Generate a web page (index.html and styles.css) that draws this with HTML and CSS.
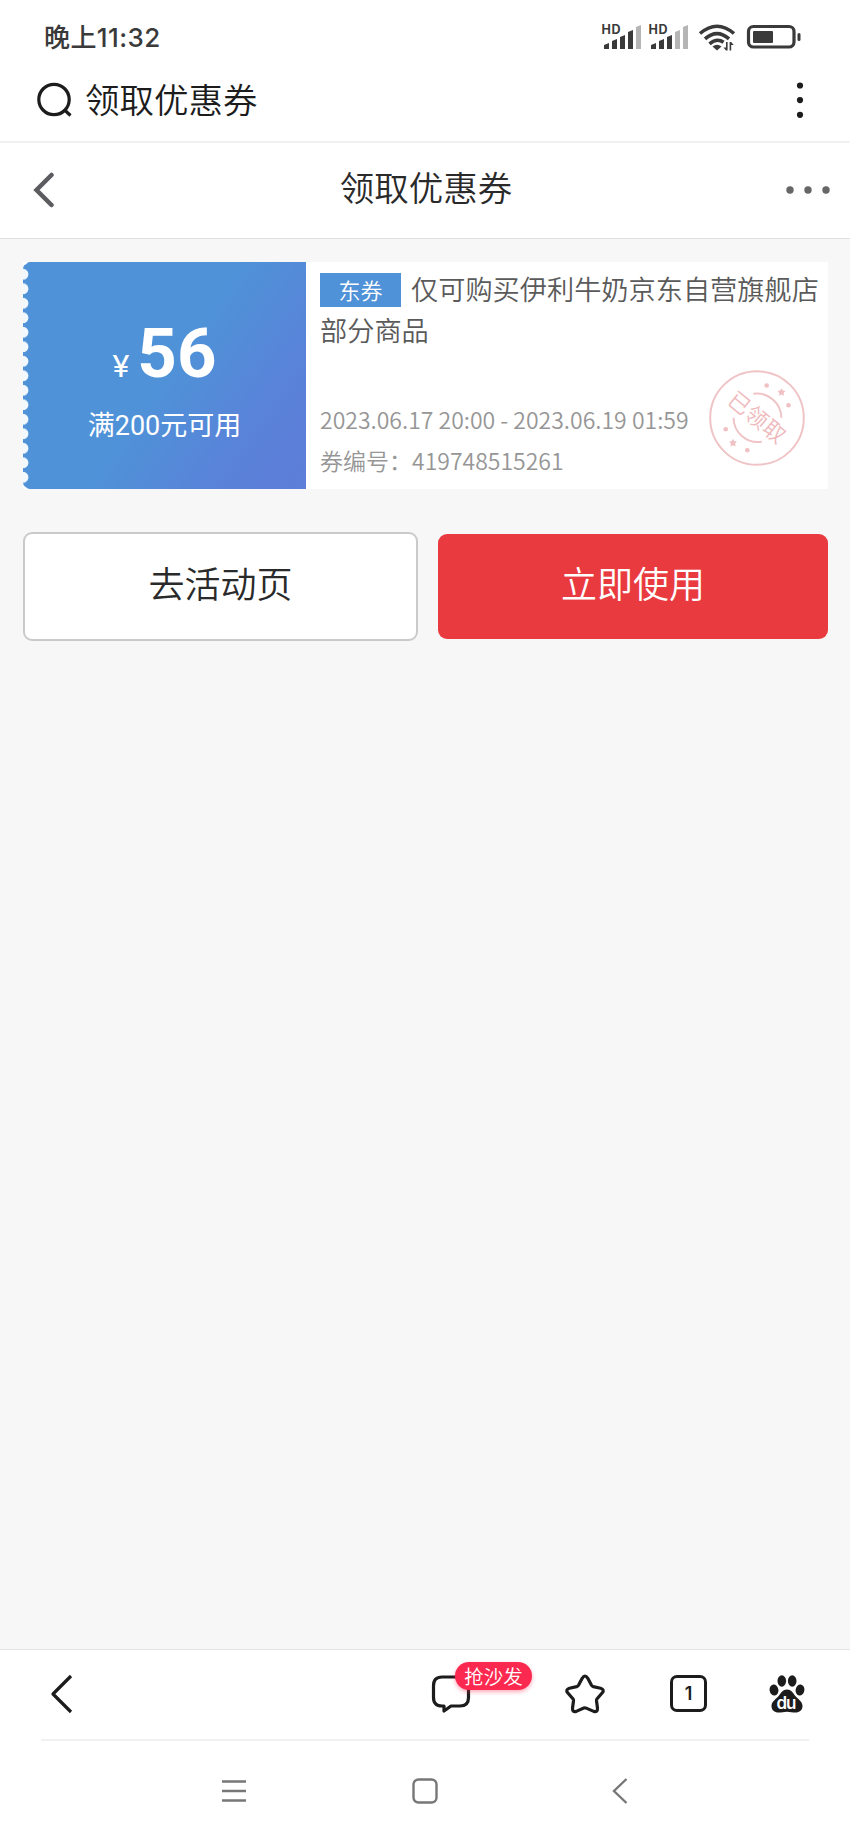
FILE: index.html
```
<!DOCTYPE html>
<html lang="zh-CN">

<head>
  <meta charset="utf-8">
  <title>领取优惠券</title>
  <meta name="viewport" content="width=device-width, initial-scale=1.0">
  <link rel="stylesheet" href="styles.css">
</head>

<body>
  <div class="container">
    <div class="status-bar">
      <span class="time">晚上11:32</span>
      <svg class="status-icons" width="204" height="32" viewBox="600 20 204 32">
        <g fill="#3a3a3a">
          <text class="hd" x="601.5" y="34" textLength="19">HD</text>
          <path d="M604 49v-4l5-2v6zM612 49v-8l5-2v10zM620 49V37l5-2v14zM628 49V32l5-2v19z" />
          <path fill="#b5b5b5" d="M636 49V27l5-2v24z" />
          <text class="hd" x="648.5" y="34" textLength="19">HD</text>
          <path d="M651 49v-4l5-2v6zM659 49v-8l5-2v10zM667 49V37l5-2v14z" />
          <path fill="#b5b5b5" d="M675 49V32l5-2v19zM683 49V27l5-2v24z" />
          <path d="M712.500 46.500q4.500-3.500 9 0l-4.500 4z" />
          <path d="M727.600 42v8.500h-1.600l-2.500-3h2.500v-5.500zM729.600 50.500v-8.500h1.600l2.500 3h-2.500v5.500z" />
        </g>
        <g fill="none" stroke="#3a3a3a">
          <path stroke-width="3.600" d="M700 33.500q17-14.500 34 0M705 38.800q12-10.500 24 0M709.500 43.800q7.500-6.200 14-1.500" />
          <rect x="748.500" y="26.500" width="45.500" height="20.500" rx="5" stroke-width="3.200" />
        </g>
        <rect x="753" y="31" width="20" height="12" rx="1" fill="#3a3a3a" />
        <rect x="797.500" y="33" width="3" height="8" rx="1.500" fill="#3a3a3a" />
      </svg>
    </div>

    <div class="search-bar">
      <svg class="search-icon" width="36" height="36" viewBox="0 0 36 36">
        <circle cx="18" cy="17.500" r="15.200" />
        <path d="M28 27.500l6.500 6" />
      </svg>
      <span class="search-text">领取优惠券</span>
      <svg class="more-v" width="8" height="36" viewBox="0 0 8 36">
        <circle cx="4" cy="3.500" r="3.100" />
        <circle cx="4" cy="18.100" r="3.100" />
        <circle cx="4" cy="32.800" r="3.100" />
      </svg>
    </div>

    <div class="header">
      <svg class="back" width="22" height="36" viewBox="0 0 22 36">
        <path d="M18.500 3L3.500 18l15 15" />
      </svg>
      <h1>领取优惠券</h1>
      <svg class="more-h" width="46" height="8" viewBox="0 0 46 8">
        <circle cx="5" cy="4" r="3.700" />
        <circle cx="23" cy="4" r="3.700" />
        <circle cx="41" cy="4" r="3.700" />
      </svg>
    </div>

    <div class="body">
      <div class="coupon">
        <div class="coupon-left">
          <div class="price"><span class="yen">¥</span>56</div>
          <div class="limit">满200元可用</div>
        </div>
        <div class="coupon-right">
          <p class="coupon-title"><span class="tag">东券</span>仅可购买伊利牛奶京东自营旗舰店部分商品</p>
          <div class="coupon-info">
            <div>2023.06.17 20:00 - 2023.06.19 01:59</div>
            <div>券编号：419748515261</div>
          </div>
          <svg class="stamp" width="98" height="98" viewBox="-49 -49 98 98">
            <circle r="46.800" />
            <path d="M-3.700-24.200A24.500 24.500 0 0 1 24.400-.2M-23.500-.2A24.500 24.500 0 0 0 4.700 23.800" />
            <text transform="rotate(39.500)" x="-34" y="7.500" textLength="67">已领取</text>
            <g class="stars">
              <path d="M0-4L1.300-1.600 4-1.200 2.100.8 2.500 3.600 0 2.400-2.500 3.600-2.100.8-4-1.200-1.300-1.600z" transform="translate(24.500 -25.800)" />
              <path d="M0-4L1.300-1.600 4-1.200 2.100.8 2.500 3.600 0 2.400-2.500 3.600-2.100.8-4-1.200-1.300-1.600z" transform="translate(-24 24.800)" />
              <circle cx="9.700" cy="-32.500" r="2.300" />
              <circle cx="31.500" cy="-12.800" r="2.300" />
              <circle cx="-31.300" cy="11.200" r="2.300" />
              <circle cx="-9.700" cy="32.300" r="2.300" />
            </g>
          </svg>
        </div>
      </div>

      <div class="button-container">
        <button class="button button-activity">去活动页</button>
        <button class="button button-use">立即使用</button>
      </div>
    </div>

    <div class="toolbar">
      <svg class="tool tool-back" width="24" height="40" viewBox="0 0 24 40">
        <path d="M21 2L3 20l18 18" />
      </svg>
      <div class="comment">
        <svg class="tool" width="40" height="40" viewBox="0 0 40 40">
          <path d="M11 3h18q8.500 0 8.500 8.500v12q0 8.500-8.500 8.500h-9l-7 5v-5h-2q-8.500 0-8.500-8.500v-12Q2.500 3 11 3z" />
        </svg>
        <span class="badge">抢沙发</span>
      </div>
      <svg class="tool tool-star" width="42" height="40" viewBox="0 0 42 40">
        <path d="M18.200 4.300q2.800-4.600 5.600 0l3.700 7q.6 1 1.800 1.300l7.300 1.600q4.200 1.300 1.700 4.500l-5.200 6q-.7.900-.6 2l1 7.600q.1 4.200-3.800 3.100l-7.500-3.300q-1.200-.5-2.400 0l-7.500 3.300q-3.900 1.100-3.800-3.100l1-7.600q.1-1.100-.6-2l-5.200-6q-2.500-3.200 1.700-4.500l7.300-1.600q1.200-.3 1.800-1.300z" />
      </svg>
      <div class="tabs">1</div>
      <svg class="paw" width="36" height="38" viewBox="0 0 36 38">
        <ellipse cx="5" cy="15" rx="4.400" ry="5.600" transform="rotate(-8 5 15)" />
        <ellipse cx="12.800" cy="6" rx="4.300" ry="5.700" />
        <ellipse cx="23.200" cy="6" rx="4.300" ry="5.700" />
        <ellipse cx="31" cy="15" rx="4.400" ry="5.600" transform="rotate(8 31 15)" />
        <path d="M18 14.500c-5 0-6 4-9 7.200-3.500 3.500-6.500 5.300-6.500 9.300 0 4.200 3 6.500 7 6.500 3 0 5.500-.8 8.500-.8s5.500.8 8.500.8c4 0 7-2.300 7-6.500 0-4-3-5.800-6.500-9.300-3-3.200-4-7.200-9-7.200z" />
        <text x="7.500" y="34" textLength="20">du</text>
      </svg>
    </div>

    <div class="system-nav">
      <svg width="24" height="26" viewBox="0 0 24 26">
        <path d="M0 3.500h24M0 13h24M0 22.500h24" />
      </svg>
      <svg width="26" height="26" viewBox="0 0 26 26">
        <rect x="1.500" y="1.500" width="23" height="23" rx="5" />
      </svg>
      <svg width="24" height="26" viewBox="-8 0 24 26">
        <path d="M14.500 1L2 13l12.500 12" />
      </svg>
    </div>
  </div>
</body>

</html>
```
FILE: styles.css
```
/* variables */
:root {
  --bg-color: #f7f7f7;
  --blue: #4f92d8;
  --red: #e93a3f;
  --dark: #1c1c1c;
}

/* global & fonts */
* {
  box-sizing: border-box;
}

body,
html {
  margin: 0;
  padding: 0;
  background: #fff;
  font-family: 'Noto Sans CJK SC', sans-serif;
  font-weight: 350;
}

svg {
  display: block;
  flex: none;
}

.container {
  height: 1842px;
  display: flex;
  flex-direction: column;
}

/* phone status bar */
.status-bar {
  height: 62px;
  padding: 9px 46px 0 44px;
  display: flex;
  justify-content: space-between;
  align-items: center;
  color: #3a3a3a;
}

.time {
  font-family: Inter, 'Noto Sans CJK SC', sans-serif;
  font-size: 26px;
  font-weight: 500;
  letter-spacing: 0.4px;
}

.status-icons {
  margin-top: 1px;
}

.hd {
  font: 700 12.500px Inter, sans-serif;
}

/* browser title */
.search-bar {
  height: 81px;
  padding: 0 46px 4px 36px;
  display: flex;
  align-items: center;
  border-bottom: 2px solid #f1f1f1;
}

.search-icon {
  fill: none;
  stroke: var(--dark);
  stroke-width: 3.2;
}

.search-text {
  margin: 0 0 4px 13px;
  font-size: 34.500px;
  line-height: 50px;
  color: var(--dark);
}

.more-v {
  margin-left: auto;
  fill: var(--dark);
}

/* page header */
.header {
  height: 96px;
  padding: 0 19px 2px 33px;
  display: flex;
  align-items: center;
  justify-content: space-between;
  border-bottom: 1px solid #dedede;
}

.header h1 {
  margin: 0 0 8px 12px;
  font-size: 34.500px;
  font-weight: 350;
  line-height: 50px;
  color: #2a2a2a;
}

.back {
  fill: none;
  stroke: #5c5c60;
  stroke-width: 4.5;
  stroke-linecap: round;
}

.more-h {
  fill: #666;
}

/* contents */
.body {
  flex: 1;
  padding: 23px 22px 0 23px;
  background: var(--bg-color);
}

.coupon {
  height: 227px;
  display: flex;
  background: #fff;
}

.coupon-left {
  width: 283px;
  padding-top: 57px;
  text-align: center;
  color: #fff;
  background:
    radial-gradient(circle at 0 7.300px, #f2f8fd 5px, transparent 5.800px) 0 5px / 7px 14.500px repeat-y,
    linear-gradient(125deg, #4f92d8 0%, #4f92d8 50%, #5a82d9 80%, #5d7dd9 100%);
  border-radius: 7px 0 0 7px;
}

.price {
  font: 700 69px/70px Roboto, sans-serif;
}

.yen {
  margin-right: 8px;
  font-size: 32px;
  font-weight: 400;
}

.limit {
  margin-top: 5px;
  font: 400 27px/40px Roboto, 'Noto Sans CJK SC', sans-serif;
}

.coupon-right {
  position: relative;
  flex: 1;
  padding: 6px 6px 8px 14px;
  display: flex;
  flex-direction: column;
  justify-content: space-between;
}

.coupon-title {
  margin: 0;
  font-size: 27.200px;
  line-height: 41px;
  color: #5a5a5a;
}

.tag {
  display: inline-block;
  width: 81px;
  height: 34px;
  margin: 5px 10px 0 0;
  vertical-align: top;
  text-align: center;
  font-size: 22px;
  line-height: 33px;
  color: #fff;
  background: var(--blue);
}

.coupon-info {
  font-size: 23px;
  line-height: 41px;
  color: #969696;
  white-space: nowrap;
}

.stamp {
  position: absolute;
  right: 22px;
  bottom: 22px;
  fill: none;
  stroke: #f0c4c6;
  stroke-width: 2;
}

.stamp text {
  font-size: 22px;
  fill: #efb9bc;
  stroke: none;
}

.stars {
  fill: #f0c0c3;
  stroke: none;
}

/* buttons */
.button-container {
  margin-top: 43px;
  display: flex;
  align-items: center;
  justify-content: space-between;
}

.button {
  padding: 0 0 9px;
  border: none;
  border-radius: 9px;
  font-family: inherit;
  font-size: 36px;
  font-weight: 350;
}

.button-activity {
  width: 395px;
  height: 109px;
  border: 2px solid #cacaca;
  background: #fff;
  color: #2a2a2a;
}

.button-use {
  width: 390px;
  height: 105px;
  background: var(--red);
  color: #fff;
}

/* browser toolbar */
.toolbar {
  height: 90px;
  padding: 0 45px 2px 50px;
  display: flex;
  align-items: center;
  border-top: 1px solid #e4e4e4;
}

.tool {
  fill: none;
  stroke: var(--dark);
  stroke-width: 3.2;
  stroke-linejoin: round;
}

.comment {
  position: relative;
  margin-left: 357px;
}

.badge {
  position: absolute;
  left: 24px;
  top: -12px;
  width: 77px;
  height: 28px;
  border-radius: 14px;
  text-align: center;
  font-size: 19.500px;
  line-height: 27px;
  color: #fff;
  background: #fb294f;
  box-shadow: 0 2px 4px rgba(251, 41, 79, 0.4);
}

.tool-star {
  margin-left: 93px;
}

.tabs {
  width: 37px;
  height: 37px;
  margin-left: 64px;
  border: 3px solid var(--dark);
  border-radius: 7px;
  text-align: center;
  font: 600 18px/31px Inter, sans-serif;
  color: var(--dark);
}

.paw {
  margin-left: auto;
  fill: var(--dark);
}

.paw text {
  font: 600 17px Inter, sans-serif;
  fill: #fff;
}

/* android navigation */
.system-nav {
  height: 103px;
  margin: 0 41px;
  padding: 0 181px 2px;
  display: flex;
  align-items: center;
  justify-content: space-between;
  border-top: 2px solid #f1f1f1;
  fill: none;
  stroke: #777;
  stroke-width: 2.4;
}
```
